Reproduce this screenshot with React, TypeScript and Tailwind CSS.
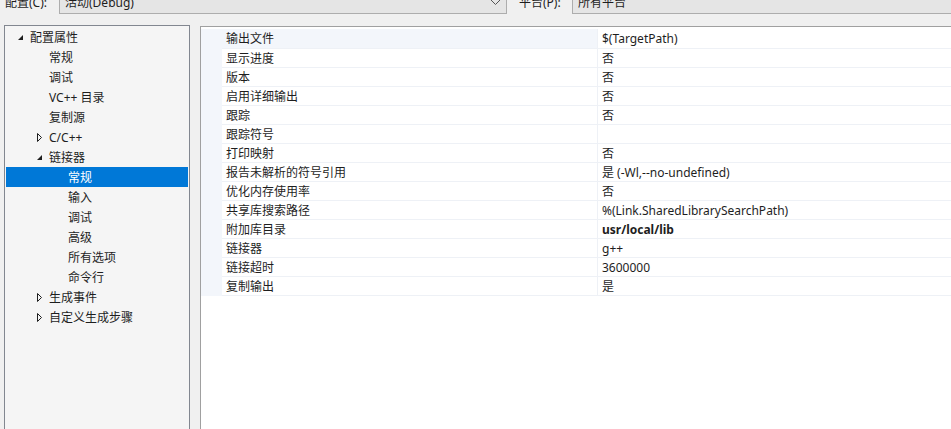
const font = "font-['Noto_Sans','Noto_Sans_CJK_SC',sans-serif]";

type TreeItem = { label: string; level: number; arrow?: "open" | "closed"; selected?: boolean };

const tree: TreeItem[] = [
  { label: "配置属性", level: 0, arrow: "open" },
  { label: "常规", level: 1 },
  { label: "调试", level: 1 },
  { label: "VC++ 目录", level: 1 },
  { label: "复制源", level: 1 },
  { label: "C/C++", level: 1, arrow: "closed" },
  { label: "链接器", level: 1, arrow: "open" },
  { label: "常规", level: 2, selected: true },
  { label: "输入", level: 2 },
  { label: "调试", level: 2 },
  { label: "高级", level: 2 },
  { label: "所有选项", level: 2 },
  { label: "命令行", level: 2 },
  { label: "生成事件", level: 1, arrow: "closed" },
  { label: "自定义生成步骤", level: 1, arrow: "closed" },
];

const props: { name: string; value: string; bold?: boolean }[] = [
  { name: "输出文件", value: "$(TargetPath)" },
  { name: "显示进度", value: "否" },
  { name: "版本", value: "否" },
  { name: "启用详细输出", value: "否" },
  { name: "跟踪", value: "否" },
  { name: "跟踪符号", value: "" },
  { name: "打印映射", value: "否" },
  { name: "报告未解析的符号引用", value: "是 (-Wl,--no-undefined)" },
  { name: "优化内存使用率", value: "否" },
  { name: "共享库搜索路径", value: "%(Link.SharedLibrarySearchPath)" },
  { name: "附加库目录", value: "usr/local/lib", bold: true },
  { name: "链接器", value: "g++" },
  { name: "链接超时", value: "3600000" },
  { name: "复制输出", value: "是" },
];

function Arrow({ kind }: { kind: "open" | "closed" }) {
  if (kind === "open") {
    return (
      <svg width="7" height="7" viewBox="0 0 7 7">
        <path d="M6 1 L6 6 L1 6 Z" fill="#1e1e1e" />
      </svg>
    );
  }
  return (
    <svg width="7" height="9" viewBox="0 0 7 9">
      <path d="M1.5 0.5 L5.5 4.5 L1.5 8.5 Z" fill="none" stroke="#1e1e1e" strokeWidth="1" />
    </svg>
  );
}

function Chevron() {
  return (
    <svg width="11" height="7" viewBox="0 0 11 7">
      <path d="M1 1 L5.5 5.5 L10 1" fill="none" stroke="#555" strokeWidth="1" />
    </svg>
  );
}

export default function App() {
  return (
    <div className={`w-[951px] h-[429px] overflow-hidden bg-[#f0f0f0] text-[12px] text-[#1e1e1e] ${font}`}>
      {/* top bar, cut off at the top of the shot */}
      <div className="h-[14px] overflow-hidden flex items-end">
        <div className="flex items-end h-[23px] shrink-0">
          <div className="w-[59px] pl-[5px] h-[23px] flex items-center">配置(C):</div>
          <div className="w-[448px] h-[23px] border border-[#adadad] bg-[#e5e5e5] flex items-center pl-[5px] pr-[5px]">
            <span className="flex-1">活动(Debug)</span>
            <Chevron />
          </div>
          <div className="w-[65px] pl-[12px] h-[23px] flex items-center">平台(P):</div>
          <div className="w-[400px] h-[23px] border border-[#adadad] bg-[#e5e5e5] flex items-center pl-[5px]">
            所有平台
          </div>
        </div>
      </div>

      <div className="flex items-start pt-[11px]">
        {/* tree */}
        <div className="ml-[4px] w-[186px] h-[420px] shrink-0 border border-[#828790] bg-[#f5f5f5] pt-[1px] px-[1px]">
          {tree.map((t, i) => (
            <div
              key={i}
              className={`h-[20px] flex items-center ${t.selected ? "bg-[#0078d7] text-white" : ""}`}
            >
              <div
                className={`shrink-0 flex items-center justify-center w-[12px] ${
                  t.level === 0 ? "ml-[8px]" : t.level === 1 ? "ml-[27px]" : "ml-[46px]"
                }`}
              >
                {t.arrow ? <Arrow kind={t.arrow} /> : null}
              </div>
              <span className="ml-[4px] pt-[1px] whitespace-nowrap">{t.label}</span>
            </div>
          ))}
        </div>

        {/* property grid */}
        <div className="ml-[10px] mt-[1px] flex-1 h-[420px] border-l border-t border-[#a0a0a0] bg-white pt-[2px]">
          <div className="flex">
            <div className="w-[21px] h-[267px] shrink-0 bg-[#f3f6fb]" />
            <div className="flex-1">
              {props.map((p, i) => (
                <div key={i} className={`flex border-b border-[#eef1f6] ${i === 0 ? "h-[20px]" : "h-[19px]"}`}>
                  <div
                    className={`w-[376px] shrink-0 pl-[4px] pt-[1px] flex items-center whitespace-nowrap border-r border-[#eef1f6] ${
                      i === 0 ? "bg-[#f3f6fb]" : ""
                    }`}
                  >
                    {p.name}
                  </div>
                  <div className={`flex-1 pl-[4px] pt-[1px] flex items-center whitespace-nowrap ${p.bold ? "font-bold" : ""}`}>
                    {p.value}
                  </div>
                </div>
              ))}
            </div>
          </div>
        </div>
      </div>
    </div>
  );
}
